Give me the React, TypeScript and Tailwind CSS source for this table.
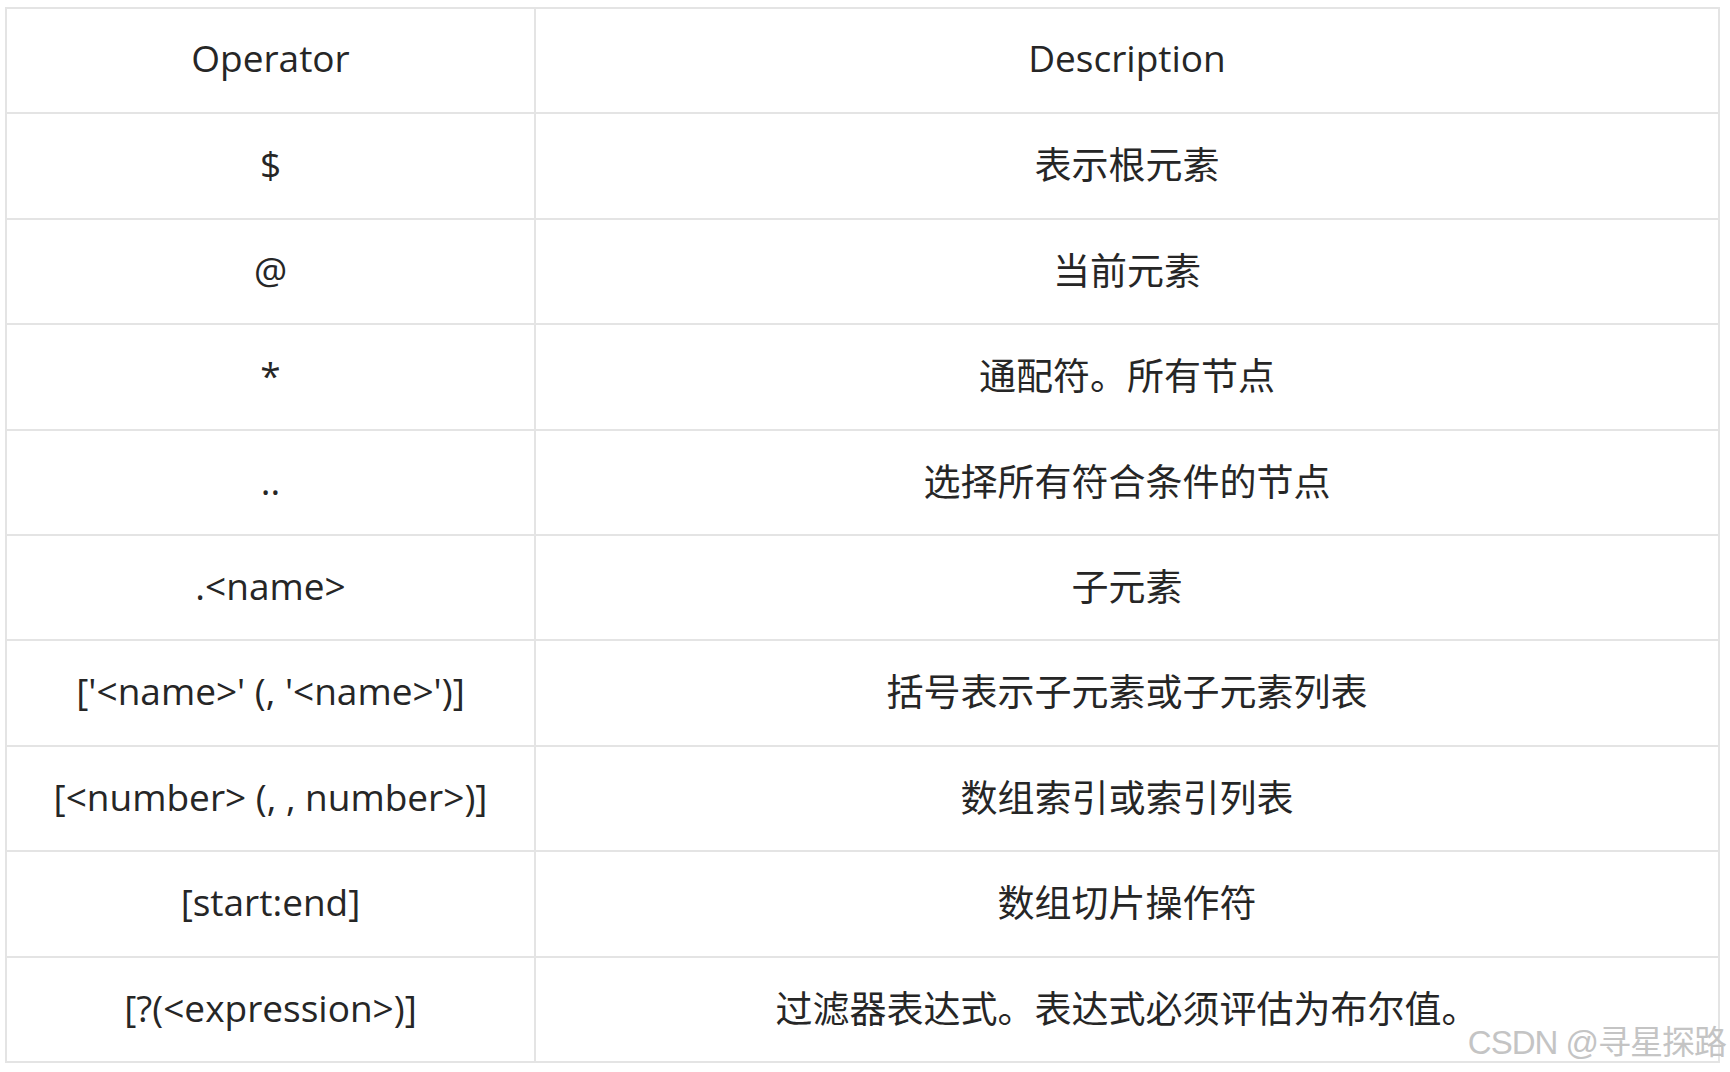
import React from "react";

const rows: [string, string][] = [
  ["$", "表示根元素"],
  ["@", "当前元素"],
  ["*", "通配符。所有节点"],
  ["..", "选择所有符合条件的节点"],
  [".<name>", "子元素"],
  ["['<name>' (, '<name>')]", "括号表示子元素或子元素列表"],
  ["[<number> (, , number>)]", "数组索引或索引列表"],
  ["[start:end]", "数组切片操作符"],
  ["[?(<expression>)]", "过滤器表达式。表达式必须评估为布尔值。"],
];

export default function App() {
  const font = {
    fontFamily: '"Open Sans", "Noto Sans CJK SC", sans-serif',
  };
  return (
    <div className="relative w-[1730px] h-[1072px] bg-white overflow-hidden" style={font}>
      <div className="ml-[5px] mt-[7px] w-[1715px] h-[1056px] grid grid-cols-[529px_1fr] grid-rows-10 border-l-2 border-t-2 border-[#e4e4e4] text-[#262626] text-[37px]">
        <div className="flex items-center justify-center pb-[5px] border-r-2 border-b-2 border-[#e4e4e4]">Operator</div>
        <div className="flex items-center justify-center pb-[5px] border-r-2 border-b-2 border-[#e4e4e4]">Description</div>
        {rows.map(([op, desc], i) => (
          <React.Fragment key={i}>
            <div className="flex items-center justify-center pb-[4px] border-r-2 border-b-2 border-[#e4e4e4] whitespace-pre">
              {op}
            </div>
            <div className="flex items-center justify-center pb-[2px] border-r-2 border-b-2 border-[#e4e4e4]">
              {desc}
            </div>
          </React.Fragment>
        ))}
      </div>
      <div
        className="absolute right-[4px] bottom-[13px] text-[33px] leading-none text-[#c4c4c4] tracking-[-1px]"
        style={{ fontFamily: '"Liberation Sans Narrow", "Liberation Sans", "Noto Sans CJK SC", sans-serif' }}
      >
        CSDN @寻星探路
      </div>
    </div>
  );
}
